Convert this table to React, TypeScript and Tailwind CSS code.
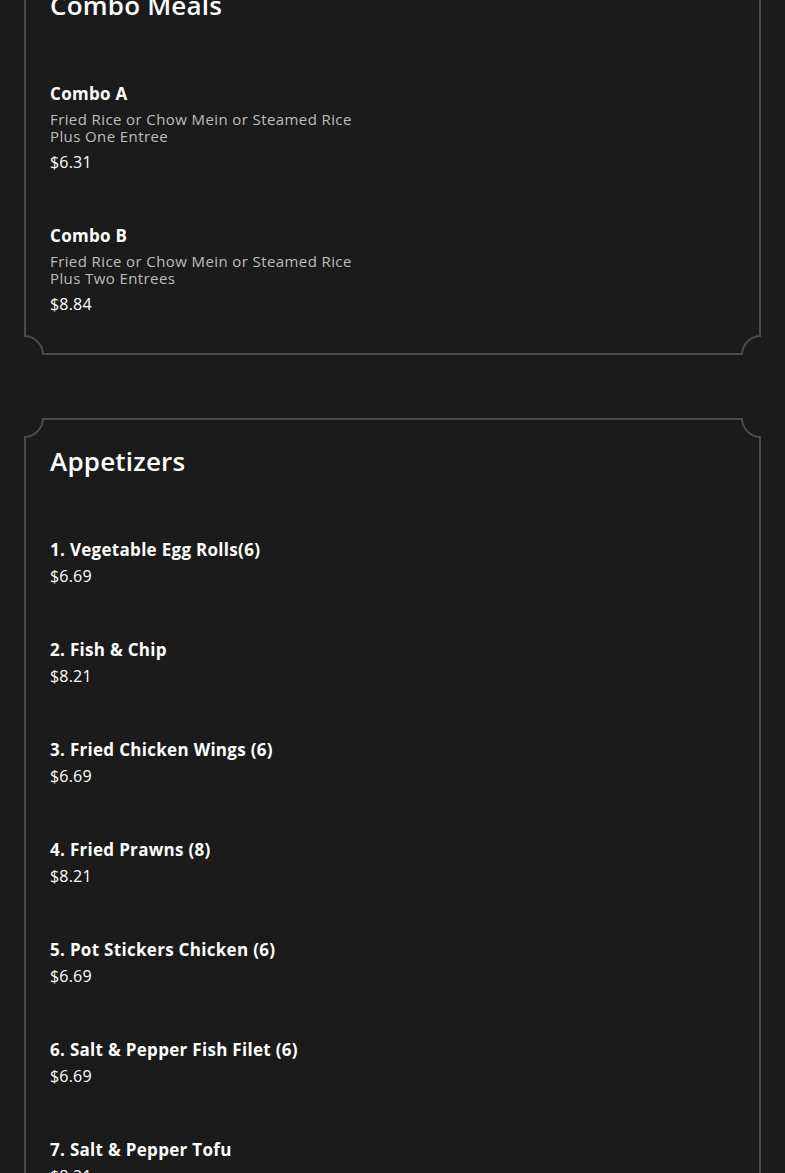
import React from "react"

type Item = { name: string; desc?: string; price: string }

const combos: Item[] = [
  { name: "Combo A", desc: "Fried Rice or Chow Mein or Steamed Rice Plus One Entree", price: "$6.31" },
  { name: "Combo B", desc: "Fried Rice or Chow Mein or Steamed Rice Plus Two Entrees", price: "$8.84" },
]

const appetizers: Item[] = [
  { name: "1. Vegetable Egg Rolls(6)", price: "$6.69" },
  { name: "2. Fish & Chip", price: "$8.21" },
  { name: "3. Fried Chicken Wings (6)", price: "$6.69" },
  { name: "4. Fried Prawns (8)", price: "$8.21" },
  { name: "5. Pot Stickers Chicken (6)", price: "$6.69" },
  { name: "6. Salt & Pepper Fish Filet (6)", price: "$6.69" },
  { name: "7. Salt & Pepper Tofu", price: "$8.21" },
]

// concave corner notch drawn over the card border
function Notch({ pos }: { pos: string }) {
  return (
    <div
      className={`absolute w-[40px] h-[40px] rounded-full border-2 border-[#4a4a4a] bg-[#1b1b1b] ${pos}`}
    />
  )
}

function MenuCard({ title, items }: { title: string; items: Item[] }) {
  return (
    <div className="relative overflow-hidden">
      <div className="border-2 border-[#4a4a4a] px-[24px] pt-[25px] pb-[37px]">
        <h2 className="text-[26px] leading-[32px] font-semibold text-white tracking-[0.2px]">{title}</h2>
        <div className="mt-[61px] flex flex-col gap-[50px]">
          {items.map((item) => (
            <div key={item.name} className="flex flex-col">
              <p className="text-[17px] leading-[24px] font-bold text-white tracking-[0.3px]">{item.name}</p>
              {item.desc && (
                <p className="mt-[5px] w-[310px] text-[15px] leading-[17px] tracking-[0.4px] text-[#bdbdbd]">
                  {item.desc}
                </p>
              )}
              <p className={`${item.desc ? "mt-[5px]" : "mt-[2px]"} text-[16px] leading-[24px] text-white tracking-[0.2px]`}>
                {item.price}
              </p>
            </div>
          ))}
        </div>
      </div>
      <Notch pos="-top-[20px] -left-[20px]" />
      <Notch pos="-top-[20px] -right-[20px]" />
      <Notch pos="-bottom-[20px] -left-[20px]" />
      <Notch pos="-bottom-[20px] -right-[20px]" />
    </div>
  )
}

export default function App() {
  return (
    <div
      className="min-h-screen bg-[#1b1b1b] px-[24px] overflow-hidden"
      style={{ fontFamily: '"Open Sans", "DejaVu Sans", sans-serif' }}
    >
      <div className="-mt-[38px] flex flex-col gap-[63px] pb-[60px]">
        <MenuCard title="Combo Meals" items={combos} />
        <MenuCard title="Appetizers" items={appetizers} />
      </div>
    </div>
  )
}
